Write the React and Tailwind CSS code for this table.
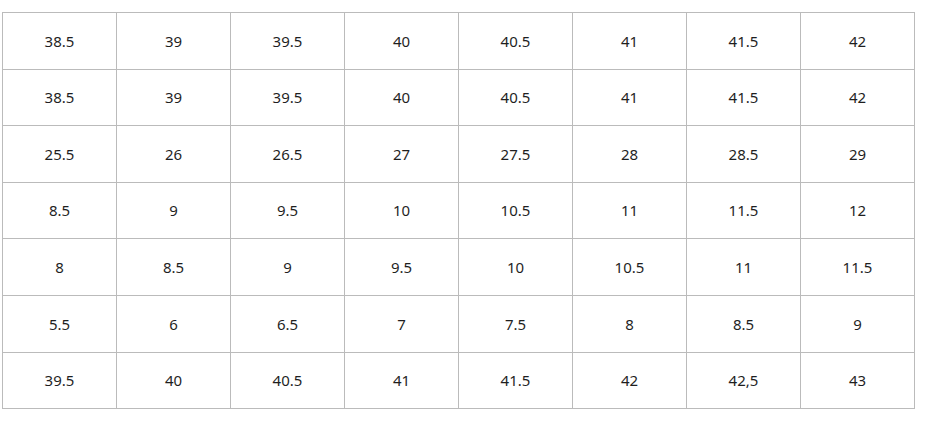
const ROWS = [
  ['38.5', '39', '39.5', '40', '40.5', '41', '41.5', '42'],
  ['38.5', '39', '39.5', '40', '40.5', '41', '41.5', '42'],
  ['25.5', '26', '26.5', '27', '27.5', '28', '28.5', '29'],
  ['8.5', '9', '9.5', '10', '10.5', '11', '11.5', '12'],
  ['8', '8.5', '9', '9.5', '10', '10.5', '11', '11.5'],
  ['5.5', '6', '6.5', '7', '7.5', '8', '8.5', '9'],
  ['39.5', '40', '40.5', '41', '41.5', '42', '42,5', '43'],
];

export default function App() {
  return (
    <div className="w-[926px] h-[436px] bg-white overflow-hidden pt-[12px] pl-[2px]">
      <table
        className="border-collapse table-fixed w-[913px] text-[15px] text-[#1f1f1f]"
        style={{ fontFamily: '"Noto Sans", "Open Sans", sans-serif' }}
      >
        <tbody>
          {ROWS.map((row, i) => (
            <tr key={i} className="h-[56.6px]">
              {row.map((v, j) => (
                <td key={j} className="border border-[#bbb] text-center align-middle p-0">
                  {v}
                </td>
              ))}
            </tr>
          ))}
        </tbody>
      </table>
    </div>
  );
}
